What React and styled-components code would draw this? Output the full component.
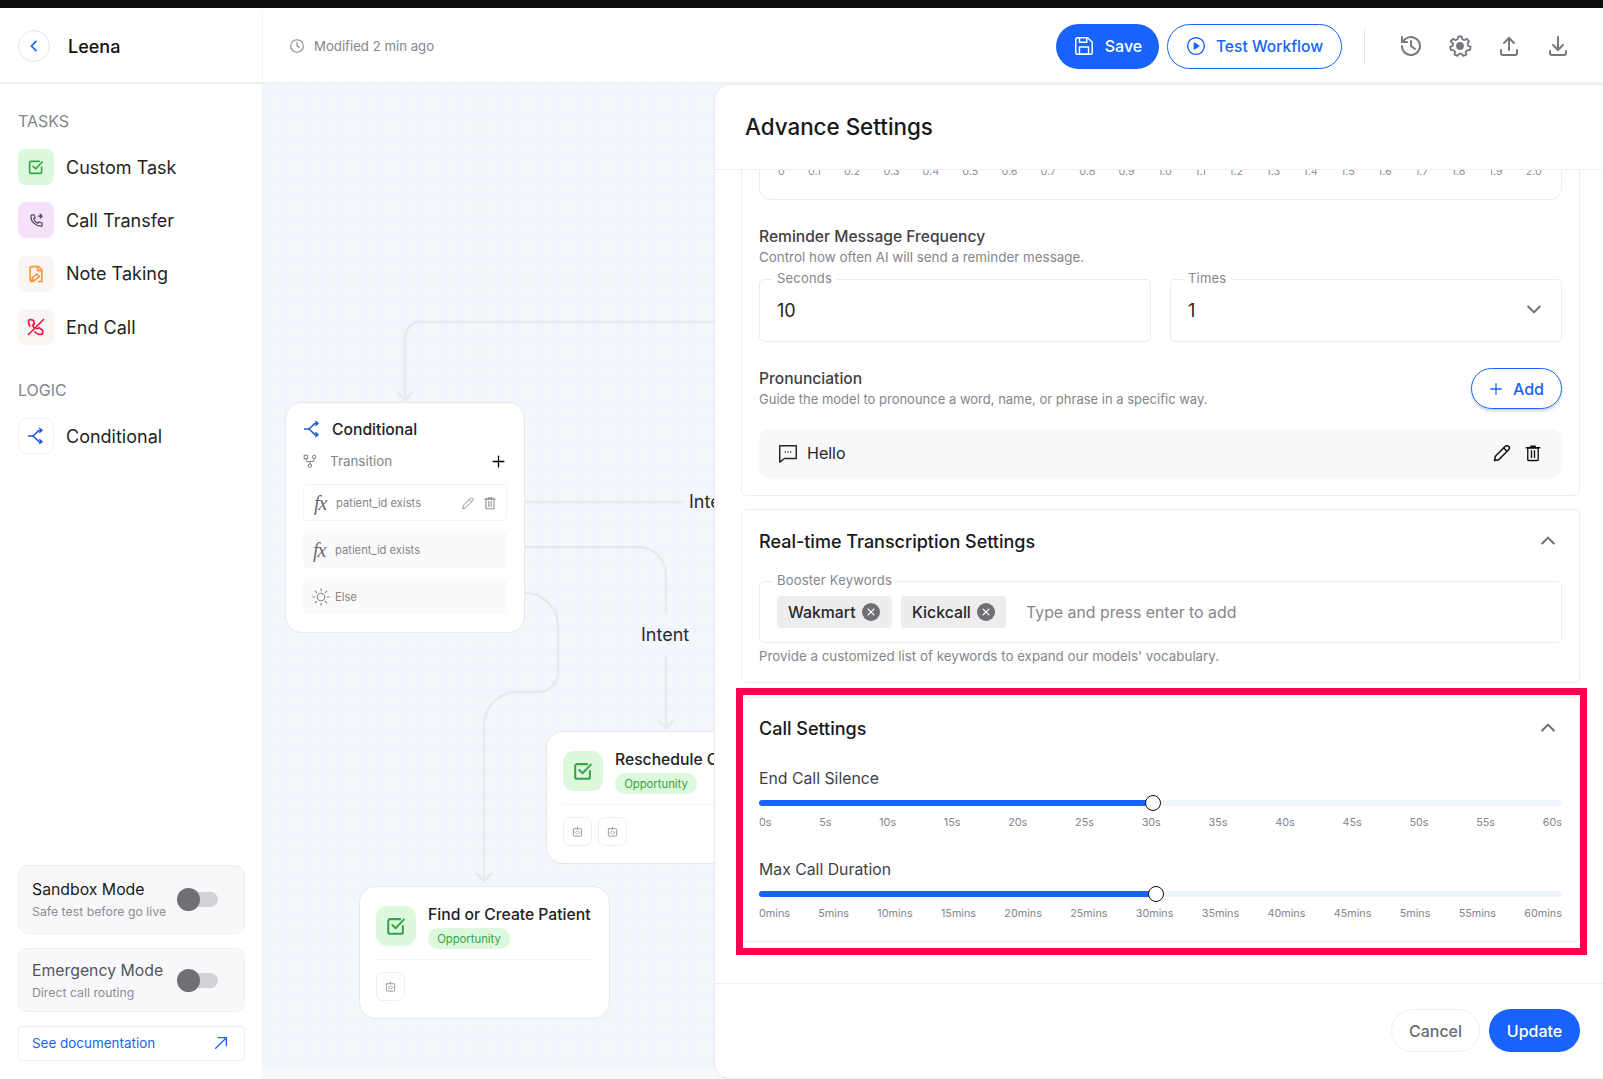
import React from 'react';
import styled, { createGlobalStyle } from 'styled-components';

const Global = createGlobalStyle`
  html, body { margin: 0; padding: 0; background: #fff; }
  body { font-family: Inter, "Liberation Sans", sans-serif; color: #18181b; overflow: hidden; }
  * { box-sizing: border-box; }
`;

const Page = styled.div`
  width: 1603px; height: 1079px; display: flex; flex-direction: column; overflow: hidden; background: #fff;
`;
const BlackBar = styled.div`height: 8px; background: #0d0d0d; flex: none;`;
const Header = styled.header`
  height: 76px; flex: none; display: flex; align-items: center; border-bottom: 2px solid #eff1f4; padding-top: 2px;
`;
const Brand = styled.div`
  width: 263px; height: 100%; display: flex; align-items: center; gap: 18px; padding-left: 18px; border-right: 1px solid #f1f2f5;
`;
const BackBtn = styled.div`
  width: 32px; height: 32px; border-radius: 50%; border: 1px solid #dfe7f5; display: flex; align-items: center; justify-content: center; color: #1863fb;
`;
const BrandName = styled.div`font-size: 18px; font-weight: 500; color: #111;`;
const Modified = styled.div`
  margin-left: 26px; display: flex; align-items: center; gap: 9px; font-size: 13.2px; color: #85858d;
`;
const HeaderRight = styled.div`margin-left: auto; display: flex; align-items: center; height: 100%;`;
const PillBtn = styled.div`
  height: 45px; border-radius: 23px; display: flex; align-items: center; justify-content: center; gap: 10px; font-size: ${p => p.$solid ? 16 : 15.6}px; font-weight: 500;
  width: ${p => p.$w}px; margin-right: ${p => p.$mr || 0}px;
  background: ${p => p.$solid ? '#1863fb' : '#fff'};
  color: ${p => p.$solid ? '#fff' : '#1863fb'};
  border: ${p => p.$solid ? 'none' : '1.5px solid #1863fb'};
`;
const VDivider = styled.div`width: 1px; height: 36px; background: #e5e7eb; margin: 0 20px 0 22px;`;
const ToolIcons = styled.div`display: flex; gap: 25px; color: #77777f; padding: 0 33px 0 14px;`;

const Body = styled.div`flex: 1; display: flex; min-height: 0;`;
const Sidebar = styled.aside`
  width: 263px; flex: none; border-right: 1px solid #f1f2f5; padding: 27px 18px 18px 18px; display: flex; flex-direction: column;
`;
const SectionLabel = styled.div`font-size: 16px; color: #85858d; line-height: 20px; margin: ${p => p.$mt || 0}px 0 18px 0;`;
const ToolList = styled.div`display: flex; flex-direction: column; gap: 17.4px;`;
const Tool = styled.div`display: flex; align-items: center; gap: 12px; font-size: 18px; color: #1f1f23;`;
const ToolIcon = styled.div`
  width: 36px; height: 36px; border-radius: 8px; flex: none; display: flex; align-items: center; justify-content: center;
  background: ${p => p.$bg}; color: ${p => p.$fg}; border: ${p => p.$line ? '1px solid #eef1f6' : 'none'};
`;
const SideBottom = styled.div`margin-top: auto; display: flex; flex-direction: column; width: 227px;`;
const ModeCard = styled.div`
  height: ${p => p.$h}px; margin-bottom: ${p => p.$mb}px; border: 1px solid #eeeef1; border-radius: 10px; background: #f8f8fa; padding: 0 0 0 13px; display: flex; align-items: center; justify-content: space-between;
`;
const ModeTitle = styled.div`font-size: 15.8px; font-weight: 400; color: ${p => p.$c}; line-height: 20px; margin: 2px 0 3px;`;
const ModeDesc = styled.div`font-size: 12.3px; color: #8d8d95; line-height: 18px;`;
const Toggle = styled.div`
  position: relative; width: 41px; height: 15px; border-radius: 8px; background: #d2d2d6; margin-right: 26px; flex: none;
  &::before { content: ''; position: absolute; left: 0; top: -4px; width: 23px; height: 23px; border-radius: 50%; background: #6f6f76; }
`;
const DocLink = styled.div`
  height: 35px; border: 1px solid #eeeef1; border-radius: 4px; display: flex; align-items: center; justify-content: space-between; padding: 0 15px 1px 13px; font-size: 13.45px; color: #1863fb;
`;

const Canvas = styled.main`
  position: relative; flex: 1; overflow: hidden; background: #f7f8fa;
`;
const Grid = styled.div`
  position: absolute; left: 0; top: 0; right: 0; height: 985px; background-color: #f3f6fb;
  background-image: linear-gradient(#edf2fc 1px, transparent 1px), linear-gradient(90deg, #edf2fc 1px, transparent 1px);
  background-size: 19.5px 20.5px; background-position: 2px 11px;
`;
const Edges = styled.svg`position: absolute; left: 0; top: 0; width: 100%; height: 100%;`;
const EdgeLabel = styled.div`
  position: absolute; left: ${p => p.$x}px; top: ${p => p.$y}px; font-size: 18px; color: #2b2b30; line-height: 22px;
`;
const Node = styled.div`
  position: absolute; left: ${p => p.$x}px; top: ${p => p.$y}px; width: ${p => p.$w}px; height: ${p => p.$h}px;
  background: #fff; border: 1px solid #e6e8ec; border-radius: 17px; padding: ${p => p.$pad || '18px 17px'};
`;
const CondHead = styled.div`display: flex; align-items: center; gap: 11px; font-size: 15.7px; font-weight: 500; color: #222; height: 20px; margin-top: -2px;`;
const CondIcon = styled.span`display: flex; color: #1d58d8;`;
const TransRow = styled.div`display: flex; align-items: center; gap: 13px; font-size: 13.4px; color: #85858d; margin-top: 12px; height: 20px; padding-right: 2px;`;
const Plus = styled.span`margin-left: auto; display: flex; color: #000;`;
const Rule = styled.div`
  height: ${p => p.$h || 37}px; margin-top: ${p => p.$mt}px; border-radius: 4px; display: flex; align-items: center; padding: 0 ${p => p.$pr || 10}px 0 ${p => p.$pl || 10}px; gap: ${p => p.$gap || 5}px; font-size: 11.2px; color: #85858d;
  background: ${p => p.$plain ? '#fff' : '#fafafa'}; border: ${p => p.$plain ? '1px solid #f3f3f5' : 'none'};
`;
const Fx = styled.span`font-family: "Liberation Serif", serif; font-style: italic; font-size: 20px; color: #6b6b73; width: 17px; letter-spacing: -1px; line-height: 1;`;
const RuleActions = styled.span`margin-left: auto; display: flex; gap: 8px; color: #8a8a91; padding-right: 0;`;
const NodeTop = styled.div`display: flex; gap: 12px; height: 42px;`;
const NodeIcon = styled.div`width: 40px; height: 40px; flex: none; border-radius: 11px; background: #dcf9dd; color: #36a347; display: flex; align-items: center; justify-content: center;`;
const NodeTitle = styled.div`font-size: 15.7px; font-weight: 500; color: #222; line-height: 18px; white-space: nowrap;`;
const Badge = styled.div`
  width: 82px; height: 21px; margin-top: 4px; border-radius: 11px; background: #dcf9dd; color: #36a347; font-size: 11.3px; display: flex; align-items: center; justify-content: center;
`;
const NodeDivider = styled.div`height: 1px; background: #f4f4f6; margin-top: 11px;`;
const NodeButtons = styled.div`display: flex; gap: 6px; margin-top: 12px;`;
const SmallBtn = styled.div`
  width: 29px; height: 29px; border: 1px solid #eeeef0; border-radius: 7px; display: flex; align-items: center; justify-content: center; color: #909097;
`;

const Panel = styled.section`
  position: absolute; left: 451px; top: 0; right: 0; bottom: 0; background: #fff; border: 1px solid #e9ebef; border-right: none; border-radius: 16px 0 0 16px; display: flex; flex-direction: column;
`;
const PanelHead = styled.div`height: 85px; flex: none; display: flex; align-items: center; padding: 0 0 1px 30px; border-bottom: 1px solid #eef0f3; font-size: 22.4px; font-weight: 500; color: #18181b;`;
const PanelScroll = styled.div`flex: 1; min-height: 0; overflow: hidden; padding: 0 23px 0 26px; position: relative; display: flex; flex-direction: column;`;
const PanelFoot = styled.div`
  height: 95px; flex: none; border-top: 1px solid #eeeff2; display: flex; align-items: flex-start; justify-content: flex-end; gap: 9px; padding: 25px 23px 0 0;
`;
const FootBtn = styled.div`
  height: 43px; width: ${p => p.$w}px; border-radius: 22px; display: flex; align-items: center; justify-content: center; font-size: 16px; font-weight: 500;
  background: ${p => p.$solid ? '#1863fb' : '#fff'}; color: ${p => p.$solid ? '#fff' : '#6b6b73'}; border: ${p => p.$solid ? 'none' : '1px solid #eeeef0'};
`;
const Card = styled.div`
  position: relative; flex: none; border: 1px solid #ebedf0; border-radius: 6px; padding: ${p => p.$pad}; margin-top: ${p => p.$mt}px; height: ${p => p.$h}px;
`;
const SliderBox = styled.div`
  height: 80px; margin-top: -11px; border: 1px solid #ebedf0; border-top: none; border-radius: 0 0 12px 12px; padding: 45px 19px 0 18px; display: flex; justify-content: space-between; font-size: 10.8px; color: #8f8f97; line-height: 14px;
`;
const FieldTitle = styled.div`font-size: 15.6px; font-weight: 500; color: #3f3f46; line-height: 20px; margin-top: ${p => p.$mt || 0}px;`;
const FieldDesc = styled.div`font-size: ${p => p.$fs || 13.4}px; color: #85858d; line-height: 20px;`;
const TwoCol = styled.div`display: grid; grid-template-columns: 392px 392px; gap: 19px; margin-top: 12px;`;
const Outlined = styled.div`
  position: relative; height: 63px; border: 1px solid #e9ebee; border-radius: 5px; padding: 0 17px; display: flex; align-items: center; font-size: 18px; color: #1f1f23; justify-content: space-between;
`;
const Legend = styled.span`
  position: absolute; left: 12px; top: -10px; padding: 0 5px; background: #fff; font-size: 13px; line-height: 16px; color: #85858d; letter-spacing: .2px;
`;
const SpacedRow = styled.div`display: flex; justify-content: space-between; align-items: flex-start; margin-top: 27px;`;
const AddBtn = styled.div`
  width: 91px; height: 41px; margin-top: -1px; border: 1.5px solid #1863fb; border-radius: 21px; color: #1863fb; font-size: 16px; font-weight: 500; display: flex; align-items: center; justify-content: center; gap: 10px; box-shadow: 0 2px 3px rgba(40,80,160,.25);
`;
const HelloRow = styled.div`
  height: 49px; margin-top: 20px; background: #f7f8fa; border-radius: 10px; display: flex; align-items: center; padding: 0 20px 1px 18px; gap: 8px; font-size: 16px; color: #27272a;
`;
const HelloActions = styled.div`margin-left: auto; display: flex; gap: 12px; color: #111; align-items: center;`;
const CardHead = styled.div`display: flex; align-items: center; justify-content: space-between; font-size: 18px; font-weight: 500; color: #18181b; height: 24px; padding-right: 4px;`;
const ChevronWrap = styled.span`color: #6f6f76; display: flex; margin-top: ${p => p.$mt || 0}px;`;
const Chip = styled.div`
  height: 32px; border-radius: 4px; background: #ededee; display: flex; align-items: center; gap: 6px; padding: 0 0 0 11px; width: ${p => p.$w}px; margin-right: 9px; font-size: 15.8px; font-weight: 500; color: #27272a; flex: none;
`;
const ChipX = styled.span`width: 18px; height: 18px; border-radius: 50%; background: #6f6f76; color: #fff; display: flex; align-items: center; justify-content: center; flex: none;`;
const Placeholder = styled.span`font-size: 15.85px; color: #85858d; margin-left: 11px;`;
const KeywordBox = styled(Outlined)`justify-content: flex-start; margin-top: 28px; padding: 0 17px; height: 62px;`;
const Help = styled.div`font-size: 13.35px; color: #85858d; line-height: 20px; margin-top: 3px;`;
const Highlight = styled.div`
  position: absolute; left: -6px; right: -8px; top: -10px; bottom: -14px; border: 7px solid #ff0050; pointer-events: none;
`;
const SliderBlock = styled.div`margin-top: ${p => p.$mt}px;`;
const SliderLabel = styled.div`font-size: 15.8px; color: #3f3f46; line-height: 20px;`;
const Track = styled.div`position: relative; height: 6px; border-radius: 3px; background: #eef4fe; margin-top: 11px;`;
const Fill = styled.div`position: absolute; left: 0; top: 0; bottom: 0; border-radius: 3px; background: #1863fb;`;
const Thumb = styled.div`
  position: absolute; top: 50%; width: 16px; height: 16px; margin: -8px 0 0 -8px; border-radius: 50%; background: #fff; border: 1.5px solid #111;
`;
const Ticks = styled.div`display: flex; justify-content: space-between; margin-top: 10px; font-size: 10.8px; color: #85858d; line-height: 14px;`;

const I = ({ s = 24, sw = 2, children, vb = 24 }) => (
  <svg width={s} height={s} viewBox={`0 0 ${vb} ${vb}`} fill="none" stroke="currentColor" strokeWidth={sw} strokeLinecap="round" strokeLinejoin="round">{children}</svg>
);
const CheckBox = ({ s = 20 }) => (
  <I s={s} sw={2.2}><path d="M19.5 12v6.5a2 2 0 0 1-2 2h-12a2 2 0 0 1-2-2v-12a2 2 0 0 1 2-2h11" /><path d="M8 11l3.5 3.5 9-9.5" /></I>
);
const Cond = ({ s = 18 }) => (
  <I s={s} sw={2}><path d="M2 12h6l8-7.5h3" /><path d="M8 12l8 7.5h3" /><path d="M17 2l3 2.5L17 7" /><path d="M17 17l3 2.5L17 22" /></I>
);
const Pencil = ({ s = 16, sw = 1.6 }) => (
  <I s={s} sw={sw}><path d="M3 21l1-5L16 4a2 2 0 0 1 4 4L8 20z" /><path d="M14 6l4 4" /></I>
);
const Trash = ({ s = 16 }) => (
  <I s={s} sw={1.8}><path d="M3 5h18" /><path d="M9 5V3h6v2" /><rect x="5" y="5" width="14" height="17" rx="1.5" /><path d="M10 9v9M14 9v9" /></I>
);
const Robot = () => (
  <I s={11} sw={2}><rect x="3" y="6" width="18" height="16" rx="1.5" /><path d="M12 2v4" /><path d="M10 11l-2.5 3 2.5 3M14 11l2.5 3-2.5 3" /></I>
);
const Chevron = ({ up }) => (
  <I s={20} sw={2.4}><path d={up ? 'M5 15l7-7 7 7' : 'M5 9l7 7 7-7'} /></I>
);

const sTicks = ['0s','5s','10s','15s','20s','25s','30s','35s','40s','45s','50s','55s','60s'];
const mTicks = ['0mins','5mins','10mins','15mins','20mins','25mins','30mins','35mins','40mins','45mins','5mins','55mins','60mins'];
const topTicks = ['0','0.1','0.2','0.3','0.4','0.5','0.6','0.7','0.8','0.9','1.0','1.1','1.2','1.3','1.4','1.5','1.6','1.7','1.8','1.9','2.0'];

const WorkNode = ({ x, y, w, title, buttons }) => (
  <Node $x={x} $y={y} $w={w} $h={133} $pad="19px 16px 18px">
    <NodeTop>
      <NodeIcon><CheckBox s={22} /></NodeIcon>
      <div>
        <NodeTitle>{title}</NodeTitle>
        <Badge>Opportunity</Badge>
      </div>
    </NodeTop>
    <NodeDivider />
    <NodeButtons>
      {Array.from({ length: buttons }).map((_, i) => <SmallBtn key={i}><Robot /></SmallBtn>)}
    </NodeButtons>
  </Node>
);

export default function App() {
  return (
    <Page>
      <Global />
      <BlackBar />
      <Header>
        <Brand>
          <BackBtn><I s={16} sw={2.6}><path d="M15 5l-7 7 7 7" /></I></BackBtn>
          <BrandName>Leena</BrandName>
        </Brand>
        <Modified>
          <I s={16} sw={1.6}><circle cx="12" cy="12" r="9.5" /><path d="M12 6.5V12l3.5 2" /></I>
          Modified 2 min ago
        </Modified>
        <HeaderRight>
          <PillBtn $solid $w={103} $mr={8}>
            <I s={22} sw={1.6}><path d="M5 3h11l5 5v11a2 2 0 0 1-2 2H5a2 2 0 0 1-2-2V5a2 2 0 0 1 2-2z" /><path d="M7 3v5h8V3" /><rect x="7" y="13" width="10" height="8" /></I>
            Save
          </PillBtn>
          <PillBtn $w={175}>
            <I s={20} sw={1.7}><circle cx="12" cy="12" r="10" /><path d="M10 8.5l5.5 3.5-5.5 3.5z" fill="currentColor" /></I>
            Test Workflow
          </PillBtn>
          <VDivider />
          <ToolIcons>
            <I s={24} sw={2}><path d="M3 12a9 9 0 1 0 3-6.7L3 8" /><path d="M3 3v5h5" /><path d="M12 7v5l4 3" /></I>
            <I s={24} sw={1.8}><path d="M10.3 2.5h3.4l.6 2.8 2 .9 2.5-1.4 2.3 2.5-1.5 2.3.5 2.3 2.6 1-.8 3.2-2.8.1-1.4 1.7.6 2.8-3.1 1.2-1.7-2.2h-2.2l-1.7 2.2-3.1-1.2.6-2.8-1.4-1.7-2.8-.1-.8-3.2 2.6-1 .5-2.3L2.7 7.3l2.3-2.5 2.5 1.4 2-.9z" /><circle cx="12" cy="12" r="3" fill="currentColor" /></I>
            <I s={24} sw={2}><path d="M12 16V4" /><path d="M7 9l5-5 5 5" /><path d="M4 16v3a2 2 0 0 0 2 2h12a2 2 0 0 0 2-2v-3" /></I>
            <I s={24} sw={2}><path d="M12 3v13" /><path d="M7 11l5 5 5-5" /><path d="M4 17v2a2 2 0 0 0 2 2h12a2 2 0 0 0 2-2v-2" /></I>
          </ToolIcons>
        </HeaderRight>
      </Header>
      <Body>
        <Sidebar>
          <SectionLabel>TASKS</SectionLabel>
          <ToolList>
            <Tool><ToolIcon $bg="#dcf9dd" $fg="#36a347"><CheckBox s={18} /></ToolIcon>Custom Task</Tool>
            <Tool><ToolIcon $bg="#f5e1fb" $fg="#4a4453">
              <I s={15} sw={1.9}><path d="M5 3h3l2 5-2.5 1.500a11 11 0 0 0 7 7L16 14l5 2v3a2 2 0 0 1-2 2A16 16 0 0 1 3 5a2 2 0 0 1 2-2z" /><path d="M15 5h6M18 2l3 3-3 3" /></I>
            </ToolIcon>Call Transfer</Tool>
            <Tool><ToolIcon $bg="#f8f5f2" $fg="#f59a3f">
              <I s={20} sw={2.1}><path d="M9 21H7a2 2 0 0 1-2-2V5a2 2 0 0 1 2-2h8l4 4v14h-4" /><path d="M14 3v5h5" /><path d="M7 20l1-4 5-4 3 3-5 4z" /></I>
            </ToolIcon>Note Taking</Tool>
            <Tool><ToolIcon $bg="#f8f5f2" $fg="#fb0f45">
              <I s={20} sw={2}><path d="M3 21L21 3" /><path d="M5 3l4 1 1 4-2 2c.8 1.8 1.6 3 2.5 4" /><path d="M13 14l3-1 4 3v3c0 1-1 2-2 2-3 0-5.500-1.200-7.500-3" /><path d="M5 3C3.800 3 3 4 3 5c0 2 .6 4 1.600 6" /></I>
            </ToolIcon>End Call</Tool>
          </ToolList>
          <SectionLabel $mt={35}>LOGIC</SectionLabel>
          <Tool><ToolIcon $bg="#fff" $fg="#1d58d8" $line><Cond /></ToolIcon>Conditional</Tool>
          <SideBottom>
            <ModeCard $h={69} $mb={14}>
              <div><ModeTitle $c="#18181b">Sandbox Mode</ModeTitle><ModeDesc>Safe test before go live</ModeDesc></div>
              <Toggle />
            </ModeCard>
            <ModeCard $h={64} $mb={14}>
              <div><ModeTitle $c="#55555c">Emergency Mode</ModeTitle><ModeDesc>Direct call routing</ModeDesc></div>
              <Toggle />
            </ModeCard>
            <DocLink>See documentation
              <I s={16} sw={2}><path d="M4 20L20 4" /><path d="M8 4h12v12" /></I>
            </DocLink>
          </SideBottom>
        </Sidebar>
        <Canvas>
          <Grid />
          <Edges fill="none" stroke="#e7e9ee" strokeWidth="2.5">
            <path d="M460 238H158a16 16 0 0 0-16 16v62" />
            <path d="M134 308l8 8 8-8" />
            <path d="M250 418H420" />
            <path d="M250 463H375a28 28 0 0 1 28 28v38" />
            <path d="M403 572v72" />
            <path d="M395 636l8 8 8-8" />
            <path d="M250 509h12a33 33 0 0 1 33 33v46a20 20 0 0 1-20 20h-21a33 33 0 0 0-33 33v156" />
            <path d="M213 789l8 8 8-8" />
          </Edges>
          <EdgeLabel $x={426} $y={407}>Inte</EdgeLabel>
          <EdgeLabel $x={378} $y={540}>Intent</EdgeLabel>
          <Node $x={22} $y={318} $w={240} $h={231}>
            <CondHead><CondIcon><Cond /></CondIcon>Conditional</CondHead>
            <TransRow>
              <I s={14} sw={1.8}><circle cx="12" cy="20" r="2.8" /><rect x="2" y="2" width="6" height="6" /><circle cx="19" cy="5" r="2.8" /><path d="M5 8v2a3 3 0 0 0 3 3h8a3 3 0 0 0 3-3V8M12 13v4" /></I>
              Transition
              <Plus><I s={13} sw={2.4}><path d="M12 2v20M2 12h20" /></I></Plus>
            </TransRow>
            <Rule $plain $mt={13} $pr={9}><Fx>fx</Fx><span>patient_id exists</span><RuleActions><Pencil s={14} /><Trash s={14} /></RuleActions></Rule>
            <Rule $mt={10}><Fx>fx</Fx><span>patient_id exists</span></Rule>
            <Rule $mt={11} $h={35} $pl={8} $gap={4}>
              <I s={20} sw={1.3}><circle cx="12" cy="12" r="4.5" /><path d="M12 2v2.5M12 19.5V22M2 12h2.5M19.5 12H22M5 5l1.8 1.8M17.2 17.2L19 19M5 19l1.8-1.8M17.2 6.8L19 5" /></I>
              <span>Else</span>
            </Rule>
          </Node>
          <WorkNode x={283} y={647} w={300} title="Reschedule Call" buttons={2} />
          <WorkNode x={96} y={802} w={251} title="Find or Create Patient" buttons={1} />
          <Panel>
            <PanelHead>Advance Settings</PanelHead>
            <PanelScroll>
              <Card $mt={-40} $pad="0 17px" $h={366}>
                <SliderBox>{topTicks.map(t => <span key={t}>{t}</span>)}</SliderBox>
                <FieldTitle $mt={27}>Reminder Message Frequency</FieldTitle>
                <FieldDesc>Control how often AI will send a reminder message.</FieldDesc>
                <TwoCol>
                  <Outlined><Legend>Seconds</Legend>10</Outlined>
                  <Outlined><Legend>Times</Legend>1<ChevronWrap $mt={-3}><Chevron /></ChevronWrap></Outlined>
                </TwoCol>
                <SpacedRow>
                  <div>
                    <FieldTitle>Pronunciation</FieldTitle>
                    <FieldDesc $fs={13}>Guide the model to pronounce a word, name, or phrase in a specific way.</FieldDesc>
                  </div>
                  <AddBtn><I s={14} sw={2.2}><path d="M12 3v18M3 12h18" /></I>Add</AddBtn>
                </SpacedRow>
                <HelloRow>
                  <I s={22} sw={1.6}><path d="M3 4h18v14H8l-5 4z" /><path d="M9 11h.01M12 11h.01M15 11h.01" /></I>
                  Hello
                  <HelloActions><Pencil s={20} sw={1.8} /><Trash s={18} /></HelloActions>
                </HelloRow>
              </Card>
              <Card $mt={13} $pad="19px 17px 0" $h={174}>
                <CardHead>Real-time Transcription Settings<ChevronWrap><Chevron up /></ChevronWrap></CardHead>
                <KeywordBox>
                  <Legend>Booster Keywords</Legend>
                  <Chip $w={115}>Wakmart<ChipX><I s={10} sw={3}><path d="M5 5l14 14M19 5L5 19" /></I></ChipX></Chip>
                  <Chip $w={105}>Kickcall<ChipX><I s={10} sw={3}><path d="M5 5l14 14M19 5L5 19" /></I></ChipX></Chip>
                  <Placeholder>Type and press enter to add</Placeholder>
                </KeywordBox>
                <Help>Provide a customized list of keywords to expand our models' vocabulary.</Help>
              </Card>
              <Card $mt={14} $pad="18px 17px 0" $h={245}>
                <CardHead>Call Settings<ChevronWrap><Chevron up /></ChevronWrap></CardHead>
                <SliderBlock $mt={29}>
                  <SliderLabel>End Call Silence</SliderLabel>
                  <Track><Fill style={{ width: '49.1%' }} /><Thumb style={{ left: '49.1%' }} /></Track>
                  <Ticks>{sTicks.map(t => <span key={t}>{t}</span>)}</Ticks>
                </SliderBlock>
                <SliderBlock $mt={30}>
                  <SliderLabel>Max Call Duration</SliderLabel>
                  <Track><Fill style={{ width: '49.5%' }} /><Thumb style={{ left: '49.5%' }} /></Track>
                  <Ticks>{mTicks.map((t, i) => <span key={i}>{t}</span>)}</Ticks>
                </SliderBlock>
                <Highlight />
              </Card>
            </PanelScroll>
            <PanelFoot>
              <FootBtn $w={89}>Cancel</FootBtn>
              <FootBtn $solid $w={91}>Update</FootBtn>
            </PanelFoot>
          </Panel>
        </Canvas>
      </Body>
    </Page>
  );
}
